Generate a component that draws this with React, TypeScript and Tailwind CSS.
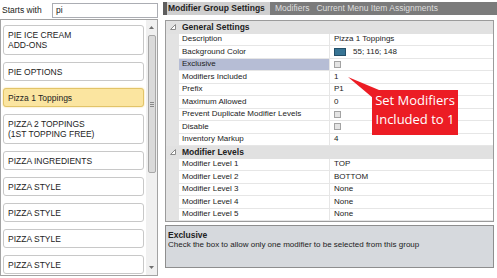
import React from "react";

const listItems = [
  { label: ["PIE ICE CREAM", "ADD-ONS"] },
  { label: ["PIE OPTIONS"] },
  { label: ["Pizza 1 Toppings"], active: true },
  { label: ["PIZZA 2 TOPPINGS", "(1ST TOPPING FREE)"] },
  { label: ["PIZZA INGREDIENTS"] },
  { label: ["PIZZA STYLE"] },
  { label: ["PIZZA STYLE"] },
  { label: ["PIZZA STYLE"] },
  { label: ["PIZZA STYLE"] },
];

type Row = {
  name: string;
  value?: string;
  kind?: "text" | "check" | "color";
  selected?: boolean;
};

const general: Row[] = [
  { name: "Description", value: "Pizza 1 Toppings" },
  { name: "Background Color", value: "55; 116; 148", kind: "color" },
  { name: "Exclusive", kind: "check", selected: true },
  { name: "Modifiers Included", value: "1" },
  { name: "Prefix", value: "P1" },
  { name: "Maximum Allowed", value: "0" },
  { name: "Prevent Duplicate Modifier Levels", kind: "check" },
  { name: "Disable", kind: "check" },
  { name: "Inventory Markup", value: "4" },
];

const levels: Row[] = [
  { name: "Modifier Level 1", value: "TOP" },
  { name: "Modifier Level 2", value: "BOTTOM" },
  { name: "Modifier Level 3", value: "None" },
  { name: "Modifier Level 4", value: "None" },
  { name: "Modifier Level 5", value: "None" },
];

const Category = ({ title }: { title: string }) => (
  <div className="h-[12.5px] flex items-center bg-[#e1e1e1]">
    <div className="w-[13px] h-full flex items-center justify-center">
      <svg width="6" height="6" viewBox="0 0 6 6">
        <polygon points="5.5,0.5 5.5,5.5 0.5,5.5" fill="#fff" stroke="#8a8a8a" strokeWidth="1" />
      </svg>
    </div>
    <span className="pl-[3px] font-bold text-[8.5px]">{title}</span>
  </div>
);

const GridRow = ({ row }: { row: Row }) => (
  <div className="h-[12.5px] flex">
    <div className="w-[13px] h-full bg-[#e3e3e3]" />
    <div
      className={
        "w-[151px] h-full border-r border-b border-[#e6e6e6] pl-[3px] flex items-center " +
        (row.selected ? "bg-[#b6bdd5]" : "bg-white")
      }
    >
      {row.name}
    </div>
    <div className="flex-1 h-full border-b border-[#e6e6e6] pl-[4px] flex items-center bg-white">
      {row.kind === "check" && (
        <div className="w-[7px] h-[7px] border border-[#a3a3a3] bg-[#e4e4e4]" />
      )}
      {row.kind === "color" && (
        <>
          <div className="w-[12px] h-[8px] border border-[#244f68] bg-[#377494]" />
          <span className="ml-[7px]">{row.value}</span>
        </>
      )}
      {(row.kind === undefined || row.kind === "text") && row.value}
    </div>
  </div>
);

export default function App() {
  return (
    <div className="w-[497px] h-[278px] bg-white flex relative overflow-hidden font-['Liberation_Sans',Arial,sans-serif] text-[#222]">
      {/* left: search + list */}
      <div className="w-[158px] flex flex-col">
        <div className="h-[19px] flex items-center pl-[2px] pt-[1px]">
          <span className="text-[8.5px] w-[50px]">Starts with</span>
          <div className="flex-1 h-[15px] border border-[#abadb3] flex items-center px-[3px] text-[8.5px]">
            pi
          </div>
        </div>
        <div className="h-[257px] border border-[#a3a3a3] flex">
          <div className="flex-1 flex flex-col gap-[7px] pt-[5px] pl-[2px] pr-[2px] overflow-hidden">
            {listItems.map((item, i) => (
              <div
                key={i}
                className={
                  "shrink-0 rounded-[3px] border px-[4px] flex flex-col justify-center text-[8.5px] leading-[10px] " +
                  (item.label.length > 1 ? "h-[30px] " : "h-[19px] ") +
                  (item.active
                    ? "bg-[#fbe5a0] border-[#e2c468] shadow-[0_0_2px_#f2d684]"
                    : "bg-white border-[#c8c8c8]")
                }
              >
                {item.label.map((l, j) => (
                  <span key={j}>{l}</span>
                ))}
              </div>
            ))}
          </div>
          <div className="w-[11px] bg-[#f0f0f0] flex flex-col items-center">
            <div className="h-[15px] flex items-center justify-center">
              <svg width="5" height="3" viewBox="0 0 5 3">
                <polygon points="2.5,0 5,3 0,3" fill="#707070" />
              </svg>
            </div>
            <div className="w-[8px] h-[138px] rounded-[2px] border border-[#a7a7a7] bg-[#dadada] flex items-center justify-center">
              <div className="flex flex-col gap-[1px]">
                <div className="w-[4px] h-px bg-[#8a8a8a]" />
                <div className="w-[4px] h-px bg-[#8a8a8a]" />
                <div className="w-[4px] h-px bg-[#8a8a8a]" />
              </div>
            </div>
            <div className="flex-1" />
            <div className="h-[15px] flex items-center justify-center">
              <svg width="5" height="3" viewBox="0 0 5 3">
                <polygon points="0,0 5,0 2.5,3" fill="#707070" />
              </svg>
            </div>
          </div>
        </div>
      </div>

      {/* right: tabs + property grid + help */}
      <div className="flex-1 ml-[5px] flex flex-col">
        <div className="mt-[2px] h-[13px] bg-[#7b7b7b] flex text-[8.5px]">
          <div className="w-[4px] bg-[#5e5e5e]" />
          <div className="w-[103px] bg-[#cfcfcf] font-bold pl-[1px] flex items-center text-[#1e1e1e]">
            Modifier Group Settings
          </div>
          <div className="ml-[5px] flex items-center text-[#dedede]">Modifiers</div>
          <div className="ml-[7px] flex items-center text-[#dedede]">Current Menu Item Assignments</div>
        </div>

        <div className="mt-[5px] ml-[2px] w-[329px] border border-[#9b9b9b] text-[8px]">
          <Category title="General Settings" />
          {general.map((r) => (
            <GridRow key={r.name} row={r} />
          ))}
          <Category title="Modifier Levels" />
          {levels.map((r) => (
            <GridRow key={r.name} row={r} />
          ))}
        </div>

        <div className="mt-[3px] ml-[2px] w-[329px] h-[43px] border border-[#8e8e8e] bg-[#d6d9dd] px-[2px] pt-[4px] flex flex-col">
          <span className="font-bold text-[8.5px] leading-[10px]">Exclusive</span>
          <span className="text-[8px] leading-[10px]">
            Check the box to allow only one modifier to be selected from this group
          </span>
        </div>
      </div>

      {/* red callout */}
      <svg className="absolute left-[345px] top-[74px]" width="40" height="26" viewBox="0 0 40 26">
        <polygon points="3,3 34,16 28,24" fill="#ec1c24" />
      </svg>
      <div className="absolute left-[372px] top-[90px] w-[86px] h-[45px] bg-[#ec1c24] text-white text-center text-[13px] leading-[19px] pt-[1px] font-medium font-['Open_Sans',sans-serif]">
        <div>Set Modifiers</div>
        <div>Included to 1</div>
      </div>
    </div>
  );
}
